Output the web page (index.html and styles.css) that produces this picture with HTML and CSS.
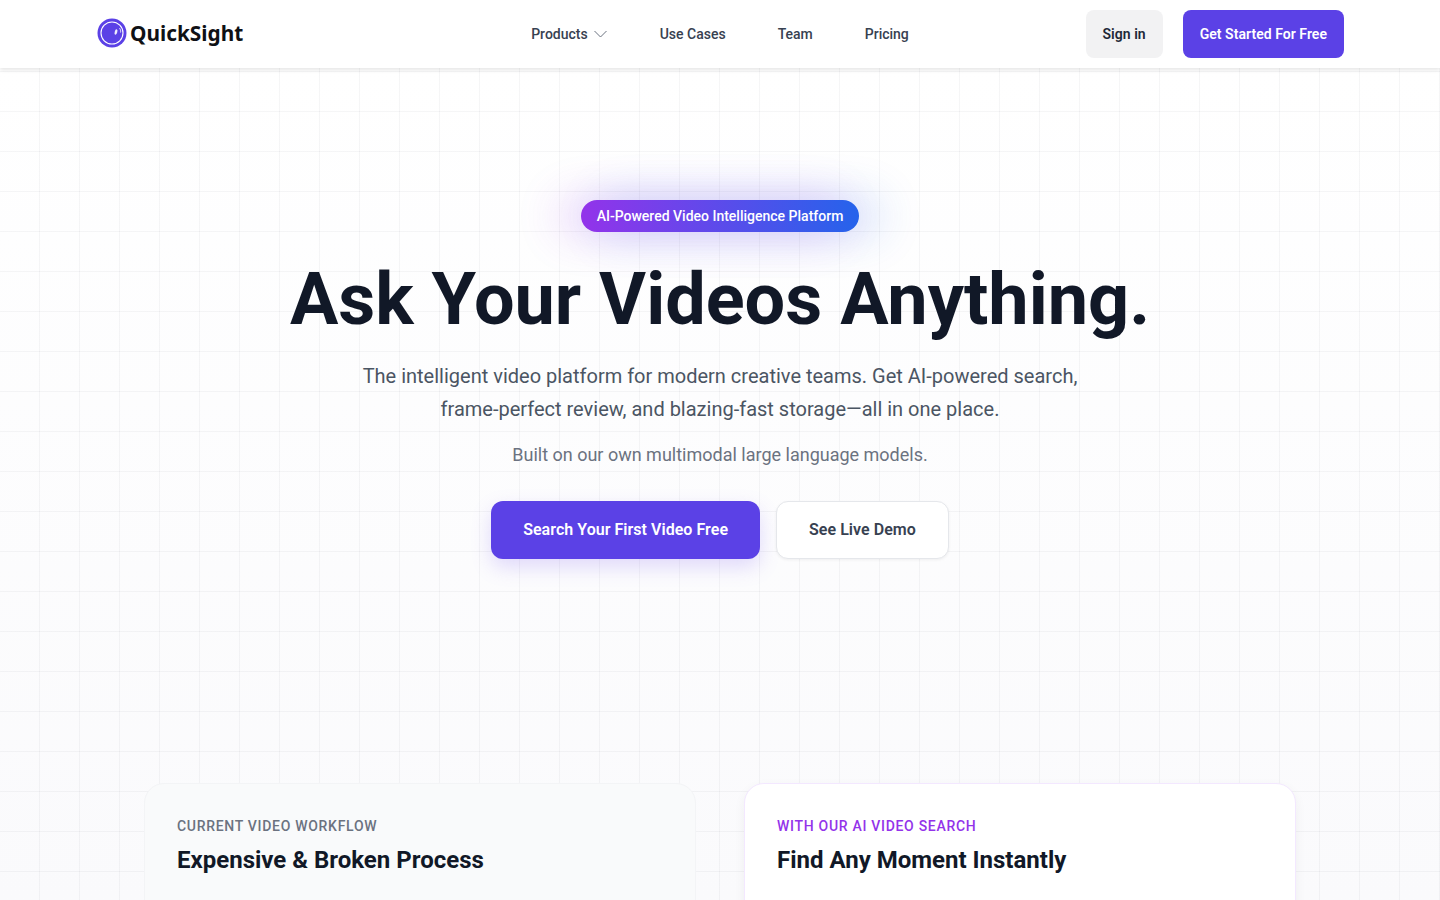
FILE: index.html
```html
<!DOCTYPE html>
<html lang="en">
<head>
  <meta charset="UTF-8" />
  <meta name="viewport" content="width=device-width, initial-scale=1.0"/>
  <title>QuickSight</title>
  <link rel="stylesheet" href="styles.css">
</head>
<body>
  <header class="navbar">
    <a class="logo" href="#">
      <svg class="logo-icon" viewBox="0 0 30 30" width="30" height="30" aria-hidden="true">
        <circle cx="15" cy="15" r="14.500" fill="#5b41e6"/>
        <circle cx="15" cy="15" r="11" fill="none" stroke="#fff" stroke-width="1.100"/>
        <ellipse cx="19" cy="14" rx="1.300" ry="2.800" fill="#fff" opacity="0.9" transform="rotate(15 19 14)"/>
        <path d="M22.800 10.500c.8 1.200 1 2.400 .8 3.600" fill="none" stroke="#fff" stroke-width="0.9" stroke-linecap="round"/>
      </svg>
      <span class="logo-text">QuickSight</span>
    </a>

    <nav class="nav-links">
      <a href="#" class="nav-link">Products
        <svg class="chevron" viewBox="0 0 14 8" width="14" height="8" aria-hidden="true">
          <path d="M.5 1l6 6 6-6" fill="none" stroke="#6b7280" stroke-width="1"/>
        </svg>
      </a>
      <a href="#" class="nav-link">Use Cases</a>
      <a href="#" class="nav-link">Team</a>
      <a href="#" class="nav-link">Pricing</a>
    </nav>

    <div class="nav-actions">
      <a href="#" class="btn-signin">Sign in</a>
      <a href="#" class="btn-started">Get Started For Free</a>
    </div>
  </header>

  <main class="page">
    <section class="hero">
      <span class="badge">AI-Powered Video Intelligence Platform</span>
      <h1>Ask Your Videos Anything.</h1>
      <p class="lead">The intelligent video platform for modern creative teams. Get AI-powered search, frame-perfect review, and blazing-fast storage—all in one place.</p>
      <p class="sub">Built on our own multimodal large language models.</p>
      <div class="cta">
        <a href="#" class="btn-primary">Search Your First Video Free</a>
        <a href="#" class="btn-secondary">See Live Demo</a>
      </div>
    </section>

    <section class="compare">
      <div class="card card-old">
        <div class="eyebrow">CURRENT VIDEO WORKFLOW</div>
        <h2>Expensive &amp; Broken Process</h2>
      </div>
      <div class="card card-new">
        <div class="eyebrow eyebrow-ai">WITH OUR AI VIDEO SEARCH</div>
        <h2>Find Any Moment Instantly</h2>
      </div>
    </section>
  </main>
</body>
</html>
```

FILE: styles.css
```css
* {
  box-sizing: border-box;
}

html, body {
  height: 100%;
  margin: 0;
  overflow: hidden;
}

body {
  font-family: 'Roboto', sans-serif;
  color: #111827;
  background: #fff;
}

a {
  text-decoration: none;
  color: inherit;
}

.navbar {
  position: relative;
  z-index: 2;
  display: grid;
  grid-template-columns: 1fr auto 1fr;
  align-items: center;
  height: 68px;
  padding: 0 96px;
  background: #fff;
  box-shadow: 0 2px 4px rgba(0, 0, 0, 0.1);
}

.logo {
  display: flex;
  align-items: center;
  gap: 3px;
  margin: -2px 0 0 1px;
}

.logo-text {
  font-family: 'Noto Sans', sans-serif;
  font-size: 20.8px;
  font-weight: 700;
  color: #0f1115;
  line-height: 1;
}

.nav-links {
  display: flex;
  align-items: center;
  gap: 52px;
}

.nav-link {
  display: flex;
  align-items: center;
  gap: 6px;
  font-size: 14px;
  font-weight: 500;
  color: #374151;
}

.nav-actions {
  display: flex;
  justify-content: flex-end;
  gap: 20px;
}

.btn-signin,
.btn-started {
  display: flex;
  align-items: center;
  height: 48px;
  padding: 0 17px;
  border-radius: 8px;
  font-size: 14px;
  font-weight: 600;
  letter-spacing: 0.04px;
}

.btn-signin {
  background: #f2f2f3;
  color: #1f2937;
}

.btn-started {
  background: #5b41e6;
  color: #fff;
}

.page {
  height: 832px;
  background-color: #fff;
  background-image:
    linear-gradient(to right, rgba(17, 24, 39, 0.04) 1px, transparent 1px),
    linear-gradient(to bottom, rgba(17, 24, 39, 0.04) 1px, transparent 1px),
    linear-gradient(to bottom, #fff 0, #fafafc 100%);
  background-size: 40px 40px, 40px 40px, 100% 100%;
  background-position: 39px 3px, 39px 3px, 0 0;
}

.hero {
  display: flex;
  flex-direction: column;
  align-items: center;
  padding-top: 132px;
  text-align: center;
}

.badge {
  height: 32px;
  padding: 0 16px;
  border-radius: 16px;
  background: linear-gradient(90deg, #9333ea, #2563eb);
  color: #fff;
  font-size: 14px;
  font-weight: 500;
  line-height: 32px;
  box-shadow: -20px 0 44px 4px rgba(147, 51, 234, 0.18), 20px 0 44px 4px rgba(37, 99, 235, 0.18);
}

h1 {
  margin: 25px 0 0;
  font-size: 72px;
  font-weight: 700;
  line-height: 86px;
  color: #111827;
}

.lead {
  width: 768px;
  margin: 17px 0 0;
  font-size: 20px;
  line-height: 33px;
  color: #4b5563;
}

.sub {
  margin: 15px 0 0;
  font-size: 18px;
  line-height: 28px;
  color: #6b7280;
}

.cta {
  display: flex;
  gap: 16px;
  margin-top: 32px;
}

.btn-primary,
.btn-secondary {
  display: flex;
  align-items: center;
  height: 58px;
  padding: 0 32px 2px;
  border-radius: 12px;
  font-size: 16px;
  font-weight: 600;
  letter-spacing: 0.04px;
}

.btn-primary {
  background: #5b41e6;
  color: #fff;
  box-shadow: 0 8px 20px rgba(124, 92, 240, 0.22);
}

.btn-secondary {
  background: #fff;
  border: 1px solid #e5e7eb;
  color: #374151;
  box-shadow: 0 1px 3px rgba(0, 0, 0, 0.06);
}

.compare {
  display: grid;
  grid-template-columns: 552px 552px;
  justify-content: center;
  gap: 48px;
  margin-top: 224px;
}

.card {
  height: 400px;
  padding: 32px;
  border-radius: 20px;
  border: 1px solid #f3f4f6;
}

.card-old {
  background: #f9fafb;
}

.card-new {
  background: #fff;
  border-color: #f3e8ff;
  box-shadow: 0 4px 12px rgba(0, 0, 0, 0.05);
}

.eyebrow {
  font-size: 14px;
  font-weight: 500;
  line-height: 20px;
  letter-spacing: 0.7px;
  color: #6b7280;
}

.eyebrow-ai {
  color: #9333ea;
}

h2 {
  margin: 8px 0 0;
  font-size: 24px;
  font-weight: 700;
  line-height: 32px;
  color: #111827;
}
```
